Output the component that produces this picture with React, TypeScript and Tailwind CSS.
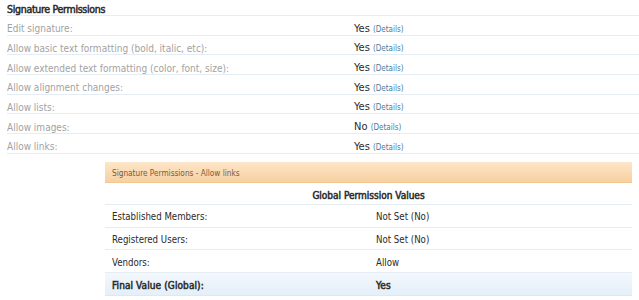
import React from "react";

const rows: [string, string][] = [
  ["Edit signature:", "Yes"],
  ["Allow basic text formatting (bold, italic, etc):", "Yes"],
  ["Allow extended text formatting (color, font, size):", "Yes"],
  ["Allow alignment changes:", "Yes"],
  ["Allow lists:", "Yes"],
  ["Allow images:", "No"],
  ["Allow links:", "Yes"],
];

const groups: [string, string][] = [
  ["Established Members:", "Not Set (No)"],
  ["Registered Users:", "Not Set (No)"],
  ["Vendors:", "Allow"],
];

export default function App() {
  return (
    <div
      className="w-[639px] h-[300px] bg-white overflow-hidden"
      style={{ fontFamily: '"DejaVu Sans Condensed", "DejaVu Sans", sans-serif' }}
    >
      <div className="pl-[7px]">
        <div className="h-[16px] pt-[4px] flex items-center text-[10.5px] [-webkit-text-stroke:0.5px_#2b2b2b] tracking-[-0.3px] text-[#2b2b2b] border-b border-[#e6eef3]">
          Signature Permissions
        </div>
        {rows.map(([label, value]) => (
          <div
            key={label}
            className="h-[19.7px] pt-[7px] flex items-center border-b border-[#e3edf3]"
          >
            <div className="w-[347px] text-[10px] text-[#a2a2a2]">{label}</div>
            <div className="text-[11px] text-[#2b2b2b]">
              {value} <span className="text-[8px] text-[#4d7a9c]">(Details)</span>
            </div>
          </div>
        ))}
        <div className="pl-[98px] pr-[7px] pt-[8px]">
          <div className="h-[21px] pt-[3px] flex items-center pl-[7px] text-[8.2px] text-[#7a5a3c] bg-gradient-to-b from-[#fde6c9] to-[#f7d0a1] border-b border-[#f3c792]">
            Signature Permissions - Allow links
          </div>
          <div className="h-[22px] pt-[5px] flex items-center justify-center text-[10px] [-webkit-text-stroke:0.5px_#2b2b2b] text-[#2b2b2b] border-b border-[#e3edf3]">
            Global Permission Values
          </div>
          {groups.map(([label, value]) => (
            <div
              key={label}
              className="h-[22.7px] pt-[4px] flex items-center border-b border-[#e3edf3] text-[9.6px] text-[#2b2b2b]"
            >
              <div className="w-[271px] pl-[7px]">{label}</div>
              <div>{value}</div>
            </div>
          ))}
          <div className="h-[22.7px] pt-[4px] flex items-center border-b border-[#dce9f2] text-[10px] [-webkit-text-stroke:0.5px_#2b2b2b] tracking-[0.1px] text-[#2b2b2b] bg-gradient-to-b from-[#f3f8fc] to-[#e4eff8]">
            <div className="w-[271px] pl-[7px]">Final Value (Global):</div>
            <div>Yes</div>
          </div>
        </div>
      </div>
    </div>
  );
}
